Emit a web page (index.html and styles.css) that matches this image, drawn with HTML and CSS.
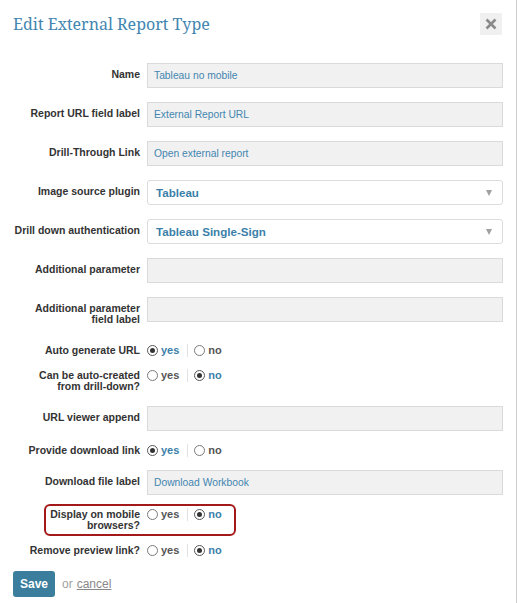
FILE: index.html
```html
<!DOCTYPE html>
<html>
<head>
<meta charset="utf-8">
<title>Edit External Report Type</title>
<link rel="stylesheet" href="styles.css">
</head>
<body>
<div class="modal">
  <div class="header">
    <h1 class="title">Edit External Report Type</h1>
    <button class="close" aria-label="Close">
      <svg width="12" height="12" viewBox="0 0 12 12"><path d="M1.5 1.5 L10.5 10.5 M10.5 1.5 L1.5 10.5" stroke="#8a8a8a" stroke-width="2.6" stroke-linecap="butt"/></svg>
    </button>
  </div>
  <form class="form">
    <div class="row">
      <div class="lbl">Name</div>
      <div class="input">Tableau no mobile</div>
    </div>
    <div class="row">
      <div class="lbl">Report URL field label</div>
      <div class="input">External Report URL</div>
    </div>
    <div class="row">
      <div class="lbl">Drill-Through Link</div>
      <div class="input">Open external report</div>
    </div>
    <div class="row">
      <div class="lbl">Image source plugin</div>
      <div class="select"><span>Tableau</span><i class="arrow"></i></div>
    </div>
    <div class="row">
      <div class="lbl">Drill down authentication</div>
      <div class="select"><span>Tableau Single-Sign</span><i class="arrow"></i></div>
    </div>
    <div class="row">
      <div class="lbl">Additional parameter</div>
      <div class="input"></div>
    </div>
    <div class="row">
      <div class="lbl">Additional parameter<br>field label</div>
      <div class="input"></div>
    </div>
    <div class="row radio-row">
      <div class="lbl">Auto generate URL</div>
      <div class="choices">
        <span class="opt on"><i class="radio checked"></i>yes</span><span class="sep"></span><span class="opt"><i class="radio"></i>no</span>
      </div>
    </div>
    <div class="row radio-row">
      <div class="lbl">Can be auto-created<br>from drill-down?</div>
      <div class="choices">
        <span class="opt"><i class="radio"></i>yes</span><span class="sep"></span><span class="opt on"><i class="radio checked"></i>no</span>
      </div>
    </div>
    <div class="row">
      <div class="lbl">URL viewer append</div>
      <div class="input"></div>
    </div>
    <div class="row radio-row">
      <div class="lbl">Provide download link</div>
      <div class="choices">
        <span class="opt on"><i class="radio checked"></i>yes</span><span class="sep"></span><span class="opt"><i class="radio"></i>no</span>
      </div>
    </div>
    <div class="row">
      <div class="lbl">Download file label</div>
      <div class="input">Download Workbook</div>
    </div>
    <div class="row radio-row highlighted">
      <div class="lbl">Display on mobile<br>browsers?</div>
      <div class="choices">
        <span class="opt"><i class="radio"></i>yes</span><span class="sep"></span><span class="opt on"><i class="radio checked"></i>no</span>
      </div>
      <div class="highlight"></div>
    </div>
    <div class="row radio-row">
      <div class="lbl">Remove preview link?</div>
      <div class="choices">
        <span class="opt"><i class="radio"></i>yes</span><span class="sep"></span><span class="opt on"><i class="radio checked"></i>no</span>
      </div>
    </div>
    <div class="actions">
      <button type="button" class="save">Save</button>
      <span class="or">or</span>
      <a class="cancel" href="#">cancel</a>
    </div>
  </form>
</div>
</body>
</html>
```
FILE: styles.css
```css
html, body {
  margin: 0;
  padding: 0;
  background: #fff;
}
.modal {
  width: 516px;
  min-height: 603px;
  border-right: 1px solid #cfcfcf;
  font-family: "Liberation Sans", Arial, sans-serif;
  color: #333;
}
.header {
  display: flex;
  align-items: center;
  justify-content: space-between;
  padding: 13px 14px 0 13px;
  height: 22px;
}
.title {
  margin: 0;
  font-family: "Noto Serif", "DejaVu Serif", serif;
  font-weight: normal;
  font-size: 16px;
  line-height: 22px;
  color: #4386b0;
}
.close {
  width: 22px;
  height: 22px;
  padding: 0;
  border: 0;
  background: #f0f0f0;
  display: flex;
  align-items: center;
  justify-content: center;
}
.form {
  margin: 28px 0 0 0;
  padding: 0 0 0 13px;
}
.row {
  display: flex;
  align-items: flex-start;
  margin-bottom: 14px;
  position: relative;
}
.lbl {
  width: 127px;
  flex: none;
  text-align: right;
  font-size: 10.5px;
  font-weight: bold;
  line-height: 11px;
  padding: 6px 0 6px 0;
  white-space: nowrap;
  color: #333;
}
.radio-row .lbl {
  padding: 0;
}
.input {
  margin-left: 7px;
  width: 356px;
  height: 25px;
  box-sizing: border-box;
  background: #f1f1f1;
  border: 1px solid #dadada;
  font-size: 10.3px;
  line-height: 23px;
  padding-left: 6px;
  color: #4386b0;
}
.select {
  margin-left: 7px;
  width: 356px;
  height: 25px;
  box-sizing: border-box;
  background: #fff;
  border: 1px solid #dcdcdc;
  border-radius: 3px;
  display: flex;
  align-items: center;
  justify-content: space-between;
  padding: 0 10px 0 8px;
  font-size: 11.6px;
  font-weight: bold;
  color: #3b7fa9;
}
.arrow {
  width: 0;
  height: 0;
  border-left: 3.5px solid transparent;
  border-right: 3.5px solid transparent;
  border-top: 6px solid #a0a0a0;
  margin-top: 1px;
}
.choices {
  margin-left: 7px;
  display: flex;
  align-items: center;
  height: 11px;
  font-size: 11px;
  font-weight: bold;
  line-height: 11px;
}
.opt {
  display: flex;
  align-items: center;
  color: #555;
}
.opt.on {
  color: #3b7fa9;
}
.radio {
  display: inline-block;
  width: 11px;
  height: 11px;
  box-sizing: border-box;
  border: 1px solid #7a7a7a;
  border-radius: 50%;
  margin-right: 3px;
  position: relative;
  background: #fff;
}
.radio.checked {
  border-color: #555;
}
.radio.checked::after {
  content: "";
  position: absolute;
  left: 2px;
  top: 2px;
  width: 5px;
  height: 5px;
  border-radius: 50%;
  background: #333;
}
.sep {
  width: 1px;
  height: 13px;
  background: #e2e2e2;
  margin: 0 6px 0 8px;
}
.highlight {
  position: absolute;
  left: 31px;
  top: -5px;
  width: 192px;
  height: 32px;
  box-sizing: border-box;
  border: 2px solid #a31818;
  border-radius: 6px;
  pointer-events: none;
}
.actions {
  display: flex;
  align-items: center;
  margin-top: 15px;
}
.save {
  width: 42px;
  height: 26px;
  padding: 0;
  border: 0;
  border-radius: 3px;
  background: #3b7d9d;
  color: #fff;
  font-family: "Liberation Sans", Arial, sans-serif;
  font-size: 12px;
  font-weight: bold;
}
.or {
  margin-left: 7px;
  font-size: 12px;
  color: #a0a0a0;
}
.cancel {
  margin-left: 4px;
  font-size: 12px;
  color: #888;
  text-decoration: underline;
}
```
